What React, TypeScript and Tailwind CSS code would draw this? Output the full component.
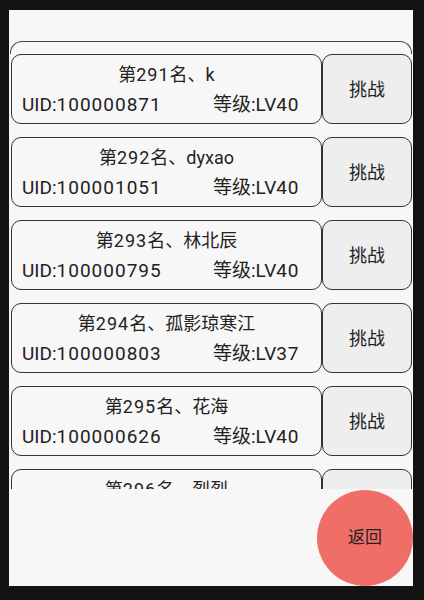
const players = [
  { rank: 291, name: 'k', uid: '100000871', level: 40 },
  { rank: 292, name: 'dyxao', uid: '100001051', level: 40 },
  { rank: 293, name: '林北辰', uid: '100000795', level: 40 },
  { rank: 294, name: '孤影琼寒江', uid: '100000803', level: 37 },
  { rank: 295, name: '花海', uid: '100000626', level: 40 },
  { rank: 296, name: '烈烈', uid: '100000911', level: 40 },
];

function App() {
  return (
    <div
      className="w-[424px] h-[600px] bg-[#121212] pt-[10px] pl-[9px]"
      style={{ fontFamily: 'Roboto, "Noto Sans CJK SC", sans-serif' }}
    >
      <div className="w-[404px] h-[576px] bg-[#f7f7f7] flex flex-col pt-[31px] overflow-hidden">
        <div className="flex-1 overflow-hidden px-[1px]">
          <div className="h-[13px] border-t-[1.5px] border-x-[1.5px] border-[#444] rounded-t-[12px]" />
          <div className="flex flex-col gap-[13px]">
            {players.map((p) => (
              <div key={p.rank} className="flex h-[70px] text-[#222]">
                <div className="w-[311px] ml-[1px] border-[1.5px] border-[#333] rounded-[10px] flex flex-col justify-center gap-[6px] pt-[2px]">
                  <div className="text-center text-[18px] leading-[24px]">
                    第<span className="tracking-[1px]">{p.rank}</span>名、{p.name}
                  </div>
                  <div className="flex text-[19px] leading-[24px] pl-[10px]">
                    <span className="w-[191px]">
                      UID:<span className="tracking-[1px]">{p.uid}</span>
                    </span>
                    <span>
                      等级:LV<span className="tracking-[0.8px]">{p.level}</span>
                    </span>
                  </div>
                </div>
                <button className="flex-1 bg-[#eeeeee] border-[1.5px] border-[#333] rounded-[10px] text-[18px] text-[#222]">
                  挑战
                </button>
              </div>
            ))}
          </div>
        </div>
        <div className="h-[97px] flex justify-end items-end">
          <button className="w-24 h-24 rounded-full bg-[#ef6f68] text-[17px] text-[#222]">
            返回
          </button>
        </div>
      </div>
    </div>
  );
}

export default App;
